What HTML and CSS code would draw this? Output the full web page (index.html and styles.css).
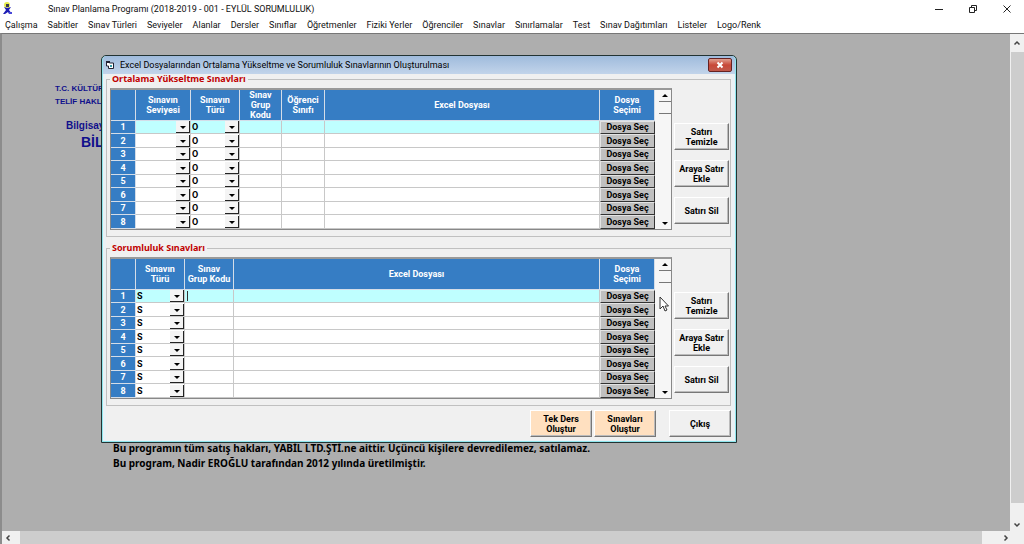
FILE: index.html
```
<!DOCTYPE html>
<html lang="tr">
<head>
<meta charset="utf-8">
<title>Sınav Planlama Programı</title>
<link rel="stylesheet" href="styles.css">
</head>
<body>
<div class="app">
  <header class="titlebar">
    <svg class="app-icon" viewBox="0 0 10 13" aria-hidden="true">
      <circle cx="4" cy="3" r="3" fill="#e6ec4a"/>
      <path d="M3 2h3v3H3z" fill="#3a3a50"/>
      <path d="M1 5l3 1 4-1-2 3 3 4H6L5 10l-3 2H0l3-4z" fill="#1c1cb4"/>
      <path d="M6 10h3v2H6z" fill="#4848d8"/>
    </svg>
    <h1 class="app-title">Sınav Planlama Programı (2018-2019 - 001 - EYLÜL SORUMLULUK)</h1>
    <div class="window-buttons">
      <button class="window-button" aria-label="Simge durumuna küçült"><svg viewBox="0 0 10 10"><path d="M1 5.500h8"/></svg></button>
      <button class="window-button" aria-label="Önceki boyut"><svg viewBox="0 0 10 10"><path d="M1.500 3.500h5v5h-5zM3.500 3V1.500h5v5H7"/></svg></button>
      <button class="window-button" aria-label="Kapat"><svg viewBox="0 0 10 10"><path d="M1.500 1.500l7 7m0-7l-7 7"/></svg></button>
    </div>
  </header>
  <nav class="menubar">
    <button>Çalışma</button><button>Sabitler</button><button>Sınav Türleri</button><button>Seviyeler</button><button>Alanlar</button><button>Dersler</button><button>Sınıflar</button><button>Öğretmenler</button><button>Fiziki Yerler</button><button>Öğrenciler</button><button>Sınavlar</button><button>Sınırlamalar</button><button>Test</button><button>Sınav Dağıtımları</button><button>Listeler</button><button>Logo/Renk</button>
  </nav>
  <main class="workspace">
    <div class="canvas">
      <section class="notice">
        <p>T.C. KÜLTÜR</p>
        <p>TELİF HAKLARI</p>
        <p class="notice-mid">Bilgisayar</p>
        <p class="notice-big">BİLGİ</p>
      </section>
      <section class="rights">
        <p>Bu programın tüm satış hakları, YABİL LTD.ŞTİ.ne aittir. Üçüncü kişilere devredilemez, satılamaz.</p>
        <p>Bu program, Nadir EROĞLU tarafından 2012 yılında üretilmiştir.</p>
      </section>
      <section class="dialog" role="dialog" aria-labelledby="dialog-title">
        <header class="dialog-bar">
          <svg class="dialog-icon" viewBox="0 0 8 8" aria-hidden="true"><path d="M.5 1h3v1h4v5.500h-5V5h-2z" fill="#fff" stroke="#223" /><path d="M0 0h4v2H0z" fill="#223"/><path d="M4 4h2v2H4z" fill="#39a"/></svg>
          <h2 id="dialog-title">Excel Dosyalarından Ortalama Yükseltme ve Sorumluluk Sınavlarının Oluşturulması</h2>
          <button class="dialog-close" aria-label="Kapat"><svg viewBox="0 0 8 8"><path d="M1.500 1.500l5 5m0-5l-5 5"/></svg></button>
        </header>
        <div class="dialog-body">
          <fieldset class="group">
            <legend>Ortalama Yükseltme Sınavları</legend>
            <div class="group-row">
              <div class="sheet">
                <table class="grid">
                  <colgroup><col class="c-num"><col class="c-level"><col class="c-type"><col class="c-code"><col class="c-class"><col><col class="c-pick"></colgroup>
                  <thead><tr><th></th><th>Sınavın<br>Seviyesi</th><th>Sınavın<br>Türü</th><th>Sınav<br>Grup<br>Kodu</th><th>Öğrenci<br>Sınıfı</th><th>Excel Dosyası</th><th>Dosya<br>Seçimi</th></tr></thead>
                  <tbody data-cells="level type:O text text text pick"></tbody>
                </table>
                <div class="scroller"><button class="up" aria-label="Yukarı"></button><span class="thumb"></span><button class="down" aria-label="Aşağı"></button></div>
              </div>
              <div class="actions"><button>Satırı<br>Temizle</button><button>Araya Satır<br>Ekle</button><button>Satırı Sil</button></div>
            </div>
          </fieldset>
          <fieldset class="group group-last">
            <legend>Sorumluluk Sınavları</legend>
            <div class="group-row">
              <div class="sheet">
                <table class="grid editing">
                  <colgroup><col class="c-num"><col class="c-type"><col class="c-wide-code"><col><col class="c-pick"></colgroup>
                  <thead><tr><th></th><th>Sınavın<br>Türü</th><th>Sınav<br>Grup Kodu</th><th>Excel Dosyası</th><th>Dosya<br>Seçimi</th></tr></thead>
                  <tbody data-cells="type:S text text pick"></tbody>
                </table>
                <div class="scroller"><button class="up" aria-label="Yukarı"></button><span class="thumb"></span><button class="down" aria-label="Aşağı"></button></div>
              </div>
              <div class="actions"><button>Satırı<br>Temizle</button><button>Araya Satır<br>Ekle</button><button>Satırı Sil</button></div>
            </div>
          </fieldset>
          <footer class="dialog-footer">
            <button class="warm">Tek Ders<br>Oluştur</button>
            <button class="warm">Sınavları<br>Oluştur</button>
            <button class="exit">Çıkış</button>
          </footer>
        </div>
      </section>
      <svg class="pointer" viewBox="0 0 10 16" aria-hidden="true"><path d="M1 1v12l3-3 2 5 2-1-2-4h3.500z" fill="#fff" stroke="#333"/></svg>
    </div>
    <div class="vbar"><button aria-label="Yukarı kaydır"><svg viewBox="0 0 8 8"><path d="M1.500 5.500L4 3l2.500 2.500"/></svg></button><span></span><button aria-label="Aşağı kaydır"><svg viewBox="0 0 8 8"><path d="M1.500 2.500L4 5l2.500-2.500"/></svg></button></div>
    <div class="hbar"><button aria-label="Sola kaydır"><svg viewBox="0 0 8 8"><path d="M5.500 1.500L3 4l2.500 2.500"/></svg></button><span></span><button aria-label="Sağa kaydır"><svg viewBox="0 0 8 8"><path d="M2.500 1.500L5 4 2.500 6.500"/></svg></button></div>
  </main>
</div>
<script src="app.js"></script>
</body>
</html>
```
FILE: styles.css
```
* { box-sizing: border-box; }
body { margin: 0; font-family: Roboto, "Noto Sans", sans-serif; font-size: 9px; color: #111; }
h1, h2, p { margin: 0; font-size: inherit; font-weight: inherit; }
button, input, select { font: inherit; color: inherit; margin: 0; padding: 0; border: 0; border-radius: 0; background: none; }
svg { display: block; }

.app { display: flex; flex-direction: column; height: 100vh; background: #fff; }
.titlebar { display: flex; align-items: center; height: 17px; padding-left: 3px; }
.app-icon { width: 10px; height: 13px; }
.app-title { flex: 1; margin-left: 35px; white-space: nowrap; }
.window-buttons { display: flex; }
.window-button { display: flex; align-items: center; justify-content: center; width: 34px; height: 16px; }
.window-button svg { width: 10px; height: 10px; fill: none; stroke: #222; }
.menubar { display: flex; gap: 10px; height: 16px; padding-left: 5px; white-space: nowrap; }

.workspace { flex: 1; min-height: 0; display: grid; grid-template: minmax(0, 1fr) 13px / minmax(0, 1fr) 14px; border-top: 1px solid #777; border-left: 2px solid #8c8c8c; background: #f0f0f0; }
.canvas { position: relative; overflow: hidden; background: #aeaeae; }
.vbar, .hbar { display: flex; background: #f0f0f0; }
.vbar { flex-direction: column; padding-left: 1px; }
.vbar span, .hbar span { flex: 1; background: #cdcdcd; }
.vbar button { height: 18px; width: 12px; display: flex; align-items: center; justify-content: center; }
.vbar button:last-child { height: 28px; align-items: flex-end; padding-bottom: 2px; }
.hbar button { width: 18px; display: flex; align-items: center; padding-left: 2px; }
.hbar button:last-child { width: 28px; justify-content: flex-end; }
.vbar svg, .hbar svg { width: 8px; height: 8px; fill: none; stroke: #444; stroke-width: 1.5; }

.notice { position: absolute; left: 53px; top: 48px; font: bold 8px/13px "Liberation Sans", Arial, sans-serif; color: #10108c; white-space: nowrap; }
.notice .notice-mid { margin: 11px 0 0 11px; font-size: 10px; }
.notice .notice-big { margin: 2px 0 0 26px; font-size: 14px; line-height: 16px; }
.rights { position: absolute; left: 111px; top: 407px; font: bold 10px/15px "Noto Sans", sans-serif; color: #000; white-space: nowrap; }

.dialog { position: absolute; left: 99px; top: 21px; width: 636px; padding: 0 4px 2px; border: 1px solid #233; border-radius: 5px 5px 0 0; background: #eaf1f5; box-shadow: inset 0 0 0 1px #8fe6ee; font-family: Roboto, sans-serif; font-size: 9px; font-weight: bold; line-height: 10px; color: #000; }
.dialog-bar { display: flex; align-items: center; height: 18px; margin: 0 -3px; padding-left: 3px; border-radius: 4px 4px 0 0; background: linear-gradient(#9fbbdc, #c2d4ea); }
.dialog-icon { width: 8px; height: 8px; }
.dialog-bar h2 { flex: 1; margin-left: 6px; font: 9px/14px Roboto, sans-serif; white-space: nowrap; }
.dialog-close { display: flex; align-items: center; justify-content: center; width: 24px; height: 14px; margin-right: 3px; border: 1px solid #622; border-radius: 2px; background: linear-gradient(#e0a090, #c84838 50%, #c0584a); }
.dialog-close svg { width: 8px; height: 8px; fill: none; stroke: #fff; stroke-width: 2; }
.dialog-body { background: #f0f0f0; }

.group { min-width: 0; margin: 0 1px 6px 0; padding: 0 0 6px 3px; border: 1px solid #c0c0c0; }
.group-last { margin-bottom: 4px; }
.group legend { margin-left: 0; padding: 0 2px; color: #c00000; font-family: "Noto Sans", sans-serif; }
.group-row { display: flex; padding-top: 4px; }
.sheet { flex: 1; display: flex; min-width: 0; border: 1px solid #888; border-top: 2px solid #999; background: #fff; }
.grid { flex: 1; width: 0; table-layout: fixed; border-collapse: separate; border-spacing: 0; }
.c-num { width: 25px; }
.c-level { width: 55px; }
.c-type { width: 49px; }
.c-code { width: 42px; }
.c-class { width: 43px; }
.c-wide-code { width: 49px; }
.c-pick { width: 55px; }
.grid th { padding: 0; background: #367dc4; color: #fff; border-right: 1px solid #d4dde8; border-bottom: 1px solid #d4dde8; line-height: 10px; white-space: nowrap; }
.grid thead th { height: 31px; }
.grid td { padding: 0; border-right: 1px solid #c8c8c8; border-bottom: 1px solid #c8c8c8; }
.grid tbody tr { height: 13px; }
.grid tbody tr:nth-child(even) { height: 14px; }
.grid tbody tr:first-child td { background: #bfffff; }
.grid input { display: block; width: 100%; height: 12px; }
.editing tr:first-child td:nth-child(3) input { width: calc(100% - 2px); height: 10px; margin-left: 2px; border-left: 1px solid #333; }
.combo { display: flex; position: relative; height: 100%; }
.combo select { appearance: none; width: 100%; height: 12px; padding-left: 1px; }
.combo::before { content: ""; position: absolute; right: 0; top: 0; bottom: 0; width: 13px; background: #f4f4f4; border-right: 1px solid #222; border-bottom: 1px solid #222; pointer-events: none; }
.combo::after { content: ""; position: absolute; right: 4px; top: 5px; border: 3px solid transparent; border-top-color: #000; border-bottom: 0; pointer-events: none; }
.grid td.pick { border: 0; }
.pick button { display: block; width: 100%; height: 13px; border: 1px solid #333; border-top-color: #e4e4e4; border-left-color: #e4e4e4; background: #c0c0c0; line-height: 11px; white-space: nowrap; }
tr:nth-child(even) .pick button { height: 14px; }

.scroller { display: flex; flex-direction: column; width: 16px; padding-left: 4px; background: #f6f6f6; }
.scroller button { height: 11px; display: flex; align-items: center; justify-content: center; }
.scroller button::before { content: ""; border: 3px solid transparent; }
.scroller .up::before { border-bottom-color: #000; border-top: 0; }
.scroller .down::before { border-top-color: #000; border-bottom: 0; }
.scroller .thumb { height: 13px; margin-bottom: auto; border-top: 1px solid #777; border-bottom: 1px solid #777; }

.actions { display: flex; flex-direction: column; justify-content: flex-end; gap: 10px; width: 58px; padding: 0 1px 6px 2px; }
.actions button, .dialog-footer button { height: 27px; border: 1px solid #777; border-top-color: #fff; border-left-color: #fff; background: #f0f0f0; box-shadow: inset -1px -1px #bbb; white-space: nowrap; }
.dialog-footer { display: flex; justify-content: flex-end; gap: 2px; padding: 0 1px 3px 0; }
.dialog-footer button { width: 62px; }
.dialog-footer .warm { background: #ffe0c0; }
.dialog-footer .exit { margin-left: 11px; }
.pointer { position: absolute; left: 657px; top: 262px; width: 10px; height: 16px; }
```
FILE: app.js
```
const ROWS = 8;
const makers = {
  level: () => '<td><span class="combo"><select aria-label="Sınavın Seviyesi"><option></option></select></span></td>',
  type: v => `<td><span class="combo"><select aria-label="Sınavın Türü"><option>${v}</option></select></span></td>`,
  text: () => '<td><input type="text" aria-label="Hücre"></td>',
  pick: () => '<td class="pick"><button>Dosya Seç</button></td>'
};
document.querySelectorAll('tbody[data-cells]').forEach(body => {
  const cells = body.dataset.cells.split(' ').map(c => c.split(':'));
  for (let i = 1; i <= ROWS; i++) {
    const row = body.insertRow();
    row.innerHTML = `<th scope="row">${i}</th>` + cells.map(([k, v]) => makers[k](v)).join('');
  }
});
```
